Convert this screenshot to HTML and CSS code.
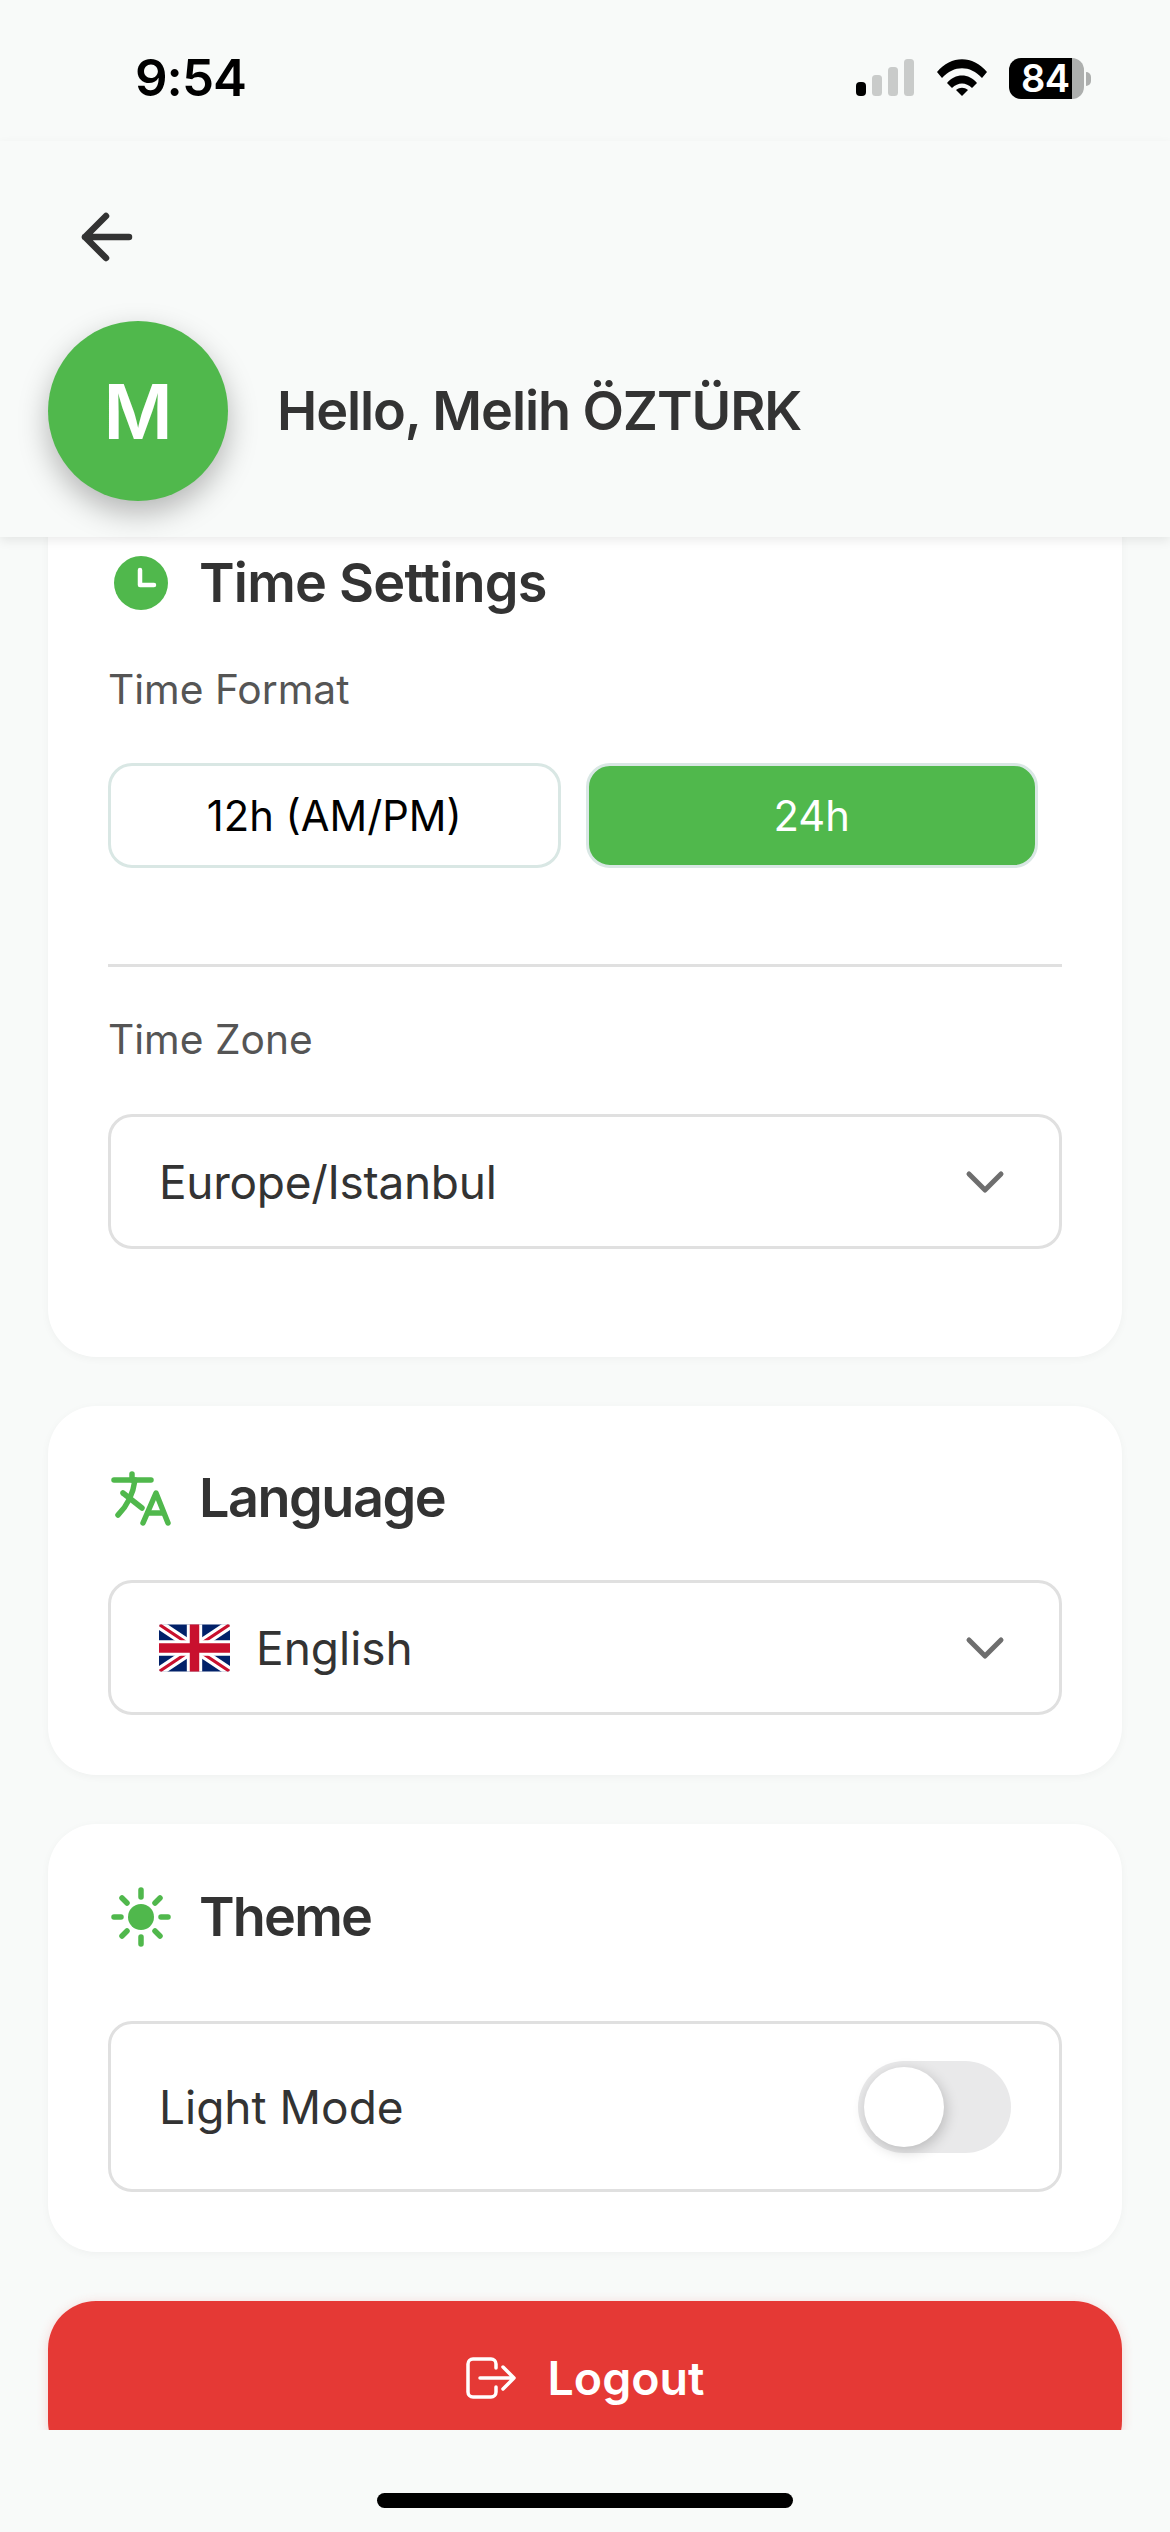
FILE: index.html
```html
<!DOCTYPE html>
<html lang="en">
<head>
<meta charset="utf-8">
<title>Settings</title>
<link rel="stylesheet" href="styles.css">
</head>
<body>
<div class="app">
  <div class="statusbar">
    <span class="time">9:54</span>
    <div class="status-icons">
      <svg class="signal" width="58" height="37" viewBox="0 0 58 37"><rect x="0" y="23" width="10" height="14" rx="4" fill="#000"/><rect x="16" y="16" width="10" height="21" rx="3.5" fill="#c9cbca"/><rect x="32" y="8" width="10" height="29" rx="3.5" fill="#c9cbca"/><rect x="48" y="0" width="10" height="37" rx="3.5" fill="#c9cbca"/></svg>
      <svg class="wifi" width="50" height="37" viewBox="0 0 50 37"><path d="M0 13C14-4 36-4 50 13l-5 6C33 6 17 6 5 19Z" fill="#000"/><path d="M10 24C18 14 32 14 40 24l-5 5C29 23 21 23 15 29Z" fill="#000"/><path d="M19 31c4-3 8-3 12 0l-6 6Z" fill="#000"/></svg>
      <div class="battery"><div class="battery-body"><span class="battery-level">84</span></div><div class="battery-nub"></div></div>
    </div>
  </div>

  <header class="header">
    <svg class="back" width="56" height="52" viewBox="0 0 56 52"><path d="M49 26H5M26 5 5 26l21 21" fill="none" stroke="#333" stroke-width="6.5" stroke-linecap="round" stroke-linejoin="round"/></svg>
    <div class="profile">
      <div class="avatar">M</div>
      <div class="greeting">Hello, Melih ÖZTÜRK</div>
    </div>
  </header>

  <main class="scroller">
    <section class="card card-time">
      <div class="card-title">
        <span class="icon-box"><svg width="54" height="54" viewBox="0 0 54 54"><circle cx="27" cy="27" r="27" fill="#50b84c"/><path d="M26 14v15h14" fill="none" stroke="#fff" stroke-width="4.5" stroke-linecap="round" stroke-linejoin="round"/></svg></span>
        <h2>Time Settings</h2>
      </div>
      <div class="label label-format">Time Format</div>
      <div class="segments">
        <div class="segment">12h (AM/PM)</div>
        <div class="segment segment-on">24h</div>
      </div>
      <div class="divider"></div>
      <div class="label label-zone">Time Zone</div>
      <div class="select select-zone">
        <span>Europe/Istanbul</span>
        <svg class="chevron" width="40" height="24" viewBox="0 0 40 24"><path d="M4 4l16 16L36 4" fill="none" stroke="#6e6e6e" stroke-width="5" stroke-linecap="round" stroke-linejoin="round"/></svg>
      </div>
    </section>

    <section class="card card-lang">
      <div class="card-title">
        <span class="icon-box"><svg width="66" height="66" viewBox="0 0 66 66" fill="none" stroke="#50b84c" stroke-width="5.5" stroke-linecap="round" stroke-linejoin="round"><path d="M6 15H43"/><path d="M24 9V15"/><path d="M27 15C25 30 18 42 10 50"/><path d="M15 28L34 43"/><path d="M35 58L48 28L60 58"/><path d="M40 48H55"/></svg></span>
        <h2 class="title-lang">Language</h2>
      </div>
      <div class="select select-lang">
        <span class="lang-value">
          <svg class="flag" width="71" height="48" viewBox="0 0 60 40"><defs><clipPath id="fc"><rect width="60" height="40" rx="2"/></clipPath></defs><g clip-path="url(#fc)"><rect width="60" height="40" fill="#012169"/><path d="M0 0l60 40M60 0L0 40" stroke="#fff" stroke-width="8"/><path d="M0 0l60 40M60 0L0 40" stroke="#c8102e" stroke-width="2.6"/><path d="M30 0v40M0 20h60" stroke="#fff" stroke-width="13"/><path d="M30 0v40M0 20h60" stroke="#c8102e" stroke-width="8"/></g></svg>
          English
        </span>
        <svg class="chevron" width="40" height="24" viewBox="0 0 40 24"><path d="M4 4l16 16L36 4" fill="none" stroke="#6e6e6e" stroke-width="5" stroke-linecap="round" stroke-linejoin="round"/></svg>
      </div>
    </section>

    <section class="card card-theme">
      <div class="card-title">
        <span class="icon-box"><svg width="60" height="60" viewBox="0 0 60 60"><circle cx="30" cy="30" r="13" fill="#50b84c"/><path d="M30 3v7M30 50v7M3 30h7M50 30h7M11 11l5 5M44 44l5 5M49 11l-5 5M16 44l-5 5" fill="none" stroke="#50b84c" stroke-width="5.5" stroke-linecap="round"/></svg></span>
        <h2 class="title-theme">Theme</h2>
      </div>
      <div class="theme-row">
        <span>Light Mode</span>
        <div class="toggle"><div class="knob"></div></div>
      </div>
    </section>

    <div class="logout">
      <svg width="50" height="42" viewBox="0 0 50 42" fill="none" stroke="#fff" stroke-width="3.5" stroke-linecap="round" stroke-linejoin="round"><path d="M30 11V7a5 5 0 0 0-5-5H7a5 5 0 0 0-5 5v28a5 5 0 0 0 5 5h18a5 5 0 0 0 5-5v-5"/><path d="M14 21h34M37 10l11 11-11 11"/></svg>
      <span>Logout</span>
    </div>
  </main>

  <footer class="homebar-zone"><div class="homebar"></div></footer>
</div>
</body>
</html>
```
FILE: styles.css
```css
* { box-sizing: border-box; }
html, body { margin: 0; padding: 0; }
body { background: #f8faf9; font-family: Inter, "Liberation Sans", sans-serif; color: #333; }
.app { width: 1170px; height: 2532px; display: flex; flex-direction: column; overflow: hidden; background: #f8faf9; }

.statusbar { height: 141px; flex: none; display: flex; justify-content: space-between; align-items: flex-start; padding: 51px 79px 0 135px; background: #f8faf9; }
.time { font-size: 51px; line-height: 54px; font-weight: 600; color: #000; letter-spacing: -1px; }
.status-icons { display: flex; align-items: flex-start; padding-top: 8px; }
.wifi { margin-left: 23px; }
.battery { margin-left: 22px; margin-top: -1px; display: flex; align-items: center; }
.battery-body { width: 75px; height: 41px; border-radius: 12px; background: linear-gradient(to right, #000 0, #000 63px, #adafae 63px); display: flex; align-items: center; padding-left: 12px; }
.battery-level { font-size: 38px; line-height: 41px; font-weight: 600; color: #fff; letter-spacing: -0.5px; }
.battery-nub { width: 5px; height: 14px; margin-left: 2px; border-radius: 0 7px 7px 0; background: #adafae; }

.header { height: 396px; flex: none; padding: 70px 0 0 48px; background: #f8faf9; box-shadow: 0 4px 10px rgba(0,0,0,.08); position: relative; z-index: 2; }
.back { display: block; margin-left: 32px; }
.profile { display: flex; align-items: center; gap: 49px; margin-top: 58px; }
.avatar { width: 180px; height: 180px; border-radius: 50%; background: #50b84c; color: #fff; font-size: 75px; font-weight: 600; display: flex; align-items: center; justify-content: center; box-shadow: 0 12px 30px rgba(0,0,0,.28); }
.greeting { font-size: 54px; font-weight: 600; color: #333; line-height: 60px; letter-spacing: -1.1px; }

.scroller { flex: 1; min-height: 0; overflow: hidden; padding: 0 48px; display: flex; flex-direction: column; gap: 49px; }
.card { flex: none; background: #fff; border-radius: 48px; padding: 62px 60px 60px; box-shadow: 0 2px 8px rgba(0,0,0,.04); }
.card-time { margin-top: -46px; padding-bottom: 108px; }
.card-theme { padding-top: 63px; }
.card-title { display: flex; align-items: center; height: 60px; gap: 25px; }
.card-title h2 { margin: 0; font-size: 54px; font-weight: 600; line-height: 60px; color: #333; letter-spacing: -0.8px; }
.card-title .title-lang { letter-spacing: -1.5px; }
.card-title .title-theme { letter-spacing: -1.8px; }
.icon-box { width: 66px; height: 66px; flex: none; display: flex; align-items: center; justify-content: center; }
.icon-box svg { display: block; flex: none; }

.label { font-size: 40.7px; line-height: 48px; color: #555; }
.label-format { margin-top: 53px; }
.label-zone { margin-top: 49px; }

.segments { display: flex; gap: 25px; margin-top: 49px; padding-right: 24px; }
.segment { flex: 1; height: 105px; border: 3px solid #d9e7e4; border-radius: 24px; display: flex; align-items: center; justify-content: center; font-size: 41.7px; color: #000; }
.segment-on { background: #50b84c; color: #fff; }
.divider { height: 3px; margin-top: 96px; background: #e0e0e0; }

.select { height: 135px; border: 3px solid #e0e0e0; border-radius: 24px; display: flex; align-items: center; justify-content: space-between; padding: 0 54px 0 48px; font-size: 46px; color: #333; }
.select-zone { margin-top: 50px; letter-spacing: -0.3px; }
.select-lang { margin-top: 52px; }
.lang-value { display: flex; align-items: center; gap: 26px; }
.flag { display: block; }
.chevron { display: block; }

.theme-row { height: 171px; margin-top: 74px; border: 3px solid #e0e0e0; border-radius: 24px; display: flex; align-items: center; justify-content: space-between; padding: 0 48px; font-size: 46px; color: #333; }
.toggle { width: 153px; height: 92px; border-radius: 46px; background: #e9e9ea; padding: 6px; }
.knob { width: 80px; height: 80px; border-radius: 50%; background: #fff; box-shadow: 2px 4px 14px rgba(0,0,0,.2); }

.logout { flex: none; height: 168px; background: #e53935; border-radius: 48px; padding-bottom: 14px; display: flex; align-items: center; justify-content: center; gap: 32px; color: #fff; font-size: 46.5px; font-weight: 600; box-shadow: 0 2px 12px rgba(229,57,53,.2); }
.logout svg { display: block; }

.homebar-zone { height: 102px; flex: none; background: #f8faf9; padding-top: 63px; display: flex; justify-content: center; align-items: flex-start; position: relative; z-index: 1; }
.homebar { width: 416px; height: 15px; border-radius: 8px; background: #000; }
```
